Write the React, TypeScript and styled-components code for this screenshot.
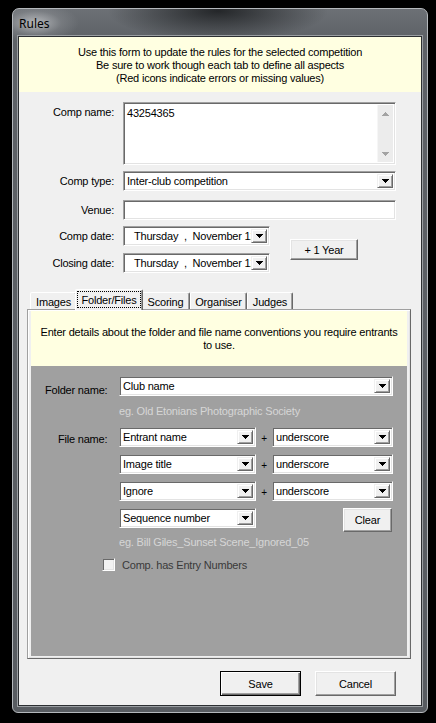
import React from "react";
import styled, { createGlobalStyle } from "styled-components";

const GlobalStyle = createGlobalStyle`
  html, body {
    margin: 0;
    padding: 0;
    background: #000;
  }

  body {
    font-family: "Liberation Sans", Arial, sans-serif;
    font-size: 11px;
    letter-spacing: -0.2px;
    color: #000;
  }

  * {
    box-sizing: border-box;
  }
`;

/* ---------- window chrome ---------- */

const DialogFrame = styled.div`
  width: 416px;
  height: 705px;
  margin: 8px 0 0 12px;
  padding: 0 5px 6px;
  display: flex;
  flex-direction: column;
  border: 1px solid #b4b8bc;
  border-radius: 7px 7px 6px 6px;
  background:
    radial-gradient(ellipse 44px 20px at 22px 14px, rgba(196, 198, 201, 0.85), rgba(150, 153, 157, 0.35) 60%, rgba(0, 0, 0, 0) 100%),
    radial-gradient(ellipse 110px 30px at 205px 2px, rgba(18, 20, 22, 0.8), rgba(18, 20, 22, 0) 100%),
    linear-gradient(180deg, #6c7075 0px, #5e6267 28px, #585c61 100%);
`;

const TitleBar = styled.div`
  height: 27px;
  display: flex;
  align-items: center;
  padding: 1px 0 0 1px;
  font-family: "Noto Sans", "Liberation Sans", sans-serif;
  font-size: 12px;
  letter-spacing: 0;
  color: #000;
`;

const Client = styled.div`
  flex: 1;
  display: flex;
  flex-direction: column;
  background: #f0f0f0;
  border: 1px solid #2c2f32;
  box-shadow: 0 0 0 1px #9a9ea2;
`;

const Banner = styled.div<{ $height: number; $padTop: number }>`
  height: ${(p) => p.$height}px;
  padding-top: ${(p) => p.$padTop}px;
  background: #ffffe1;
  text-align: center;
  line-height: 13px;
  white-space: nowrap;
`;

/* ---------- win32-ish controls ---------- */

const Sunken = styled.div<{ $height?: number }>`
  height: ${(p) => p.$height ?? 20}px;
  width: 100%;
  display: flex;
  align-items: stretch;
  padding: 2px;
  background: #fff;
  border: 1px solid;
  border-color: #a0a0a0 #fff #fff #a0a0a0;
  box-shadow: inset 1px 1px 0 #696969, inset -1px -1px 0 #e3e3e3;
  overflow: hidden;
`;

const FieldText = styled.span<{ $indent?: number; $top?: boolean }>`
  flex: 1;
  min-width: 0;
  display: flex;
  align-items: ${(p) => (p.$top ? "flex-start" : "center")};
  padding: ${(p) => (p.$top ? 2 : 0)}px 0 0 ${(p) => p.$indent ?? 1}px;
  white-space: pre;
  overflow: hidden;
`;

const DropButton = styled.span<{ $width?: number }>`
  flex: 0 0 ${(p) => p.$width ?? 16}px;
  display: flex;
  align-items: center;
  justify-content: center;
  background: #f0f0f0;
  border: 1px solid;
  border-color: #f0f0f0 #696969 #696969 #f0f0f0;
  box-shadow: inset 1px 1px 0 #fff, inset -1px -1px 0 #a0a0a0;
`;

const PushButton = styled.button<{ $width: number; $height: number; $default?: boolean }>`
  width: ${(p) => p.$width}px;
  height: ${(p) => p.$height}px;
  padding: 0;
  font-family: "Liberation Sans", Arial, sans-serif;
  font-size: 11px;
  letter-spacing: -0.2px;
  color: #000;
  background: #f0f0f0;
  border: 1px solid;
  border-color: ${(p) => (p.$default ? "#000" : "#fff #696969 #696969 #fff")};
  box-shadow: ${(p) =>
    p.$default
      ? "inset 1px 1px 0 #fff, inset -1px -1px 0 #696969, inset -2px -2px 0 #a0a0a0"
      : "inset -1px -1px 0 #a0a0a0, inset 1px 1px 0 #e3e3e3"};
`;

const ScrollBar = styled.span`
  flex: 0 0 16px;
  display: flex;
  flex-direction: column;
  justify-content: space-between;
  background: #ececec;
  border-left: 1px solid #f6f6f6;
`;

const ScrollArrow = styled.span`
  height: 17px;
  display: flex;
  align-items: center;
  justify-content: center;
`;

const Arrow = ({ up, color = "#000" }: { up?: boolean; color?: string }) => (
  <svg width="7" height="4" viewBox="0 0 7 4" style={{ transform: up ? "scaleY(-1)" : undefined }}>
    <rect x="0" y="0" width="7" height="1" fill={color} />
    <rect x="1" y="1" width="5" height="1" fill={color} />
    <rect x="2" y="2" width="3" height="1" fill={color} />
    <rect x="3" y="3" width="1" height="1" fill={color} />
  </svg>
);

const Combo = ({ value, indent }: { value: string; indent?: number }) => (
  <Sunken>
    <FieldText $indent={indent}>{value}</FieldText>
    <DropButton>
      <Arrow />
    </DropButton>
  </Sunken>
);

const DatePicker = ({ value }: { value: string }) => (
  <Sunken>
    <FieldText $indent={8}>{value}</FieldText>
    <DropButton>
      <Arrow />
    </DropButton>
  </Sunken>
);

/* ---------- top form ---------- */

const FormBody = styled.div`
  padding-top: 10px;
  display: flex;
  flex-direction: column;
`;

const FieldRow = styled.div<{ $top?: number; $fieldWidth?: number }>`
  display: grid;
  grid-template-columns: 95px ${(p) => p.$fieldWidth ?? 273}px;
  column-gap: 9px;
  align-items: center;
  margin-top: ${(p) => p.$top ?? 0}px;
`;

const FieldLabel = styled.label<{ $padTop?: number }>`
  text-align: right;
  align-self: ${(p) => (p.$padTop ? "start" : "center")};
  padding-top: ${(p) => p.$padTop ?? 0}px;
  white-space: nowrap;
`;

const DateBlock = styled.div`
  display: flex;
  align-items: center;
  margin-top: 6px;
`;

const DateColumn = styled.div`
  display: flex;
  flex-direction: column;
`;

const YearButtonSlot = styled.div`
  margin-left: 20px;
`;

/* ---------- tabs ---------- */

const TabStrip = styled.div`
  display: flex;
  align-items: flex-end;
  height: 20px;
  margin: 16px 0 0 11px;
`;

const Tab = styled.div<{ $width: number; $active?: boolean }>`
  position: relative;
  z-index: ${(p) => (p.$active ? 2 : 1)};
  width: ${(p) => (p.$active ? p.$width + 4 : p.$width)}px;
  height: ${(p) => (p.$active ? 21 : 17)}px;
  margin: 0 ${(p) => (p.$active ? -2 : 0)}px ${(p) => (p.$active ? -1 : 0)}px;
  padding: ${(p) => (p.$active ? "1px 1px 2px" : "2px 0 0")};
  display: flex;
  align-items: ${(p) => (p.$active ? "stretch" : "center")};
  justify-content: center;
  background: #f0f0f0;
  border: 1px solid;
  border-bottom: none;
  border-color: #fff #696969 transparent #fff;
  border-radius: 2px 2px 0 0;
  box-shadow: inset -1px 0 0 #a0a0a0;
  white-space: nowrap;
`;

const FocusRing = styled.span`
  flex: 1;
  display: flex;
  align-items: center;
  justify-content: center;
  border: 1px dotted #000;
`;

const TabPanel = styled.div`
  height: 350px;
  width: 384px;
  margin-left: 8px;
  padding: 1px 3px 2px;
  display: flex;
  flex-direction: column;
  border: 1px solid;
  border-color: #a0a0a0 #696969 #696969 #a0a0a0;
  box-shadow: inset 1px 1px 0 #fff, inset -1px -1px 0 #e3e3e3;
`;

const GreyPane = styled.div`
  flex: 1;
  display: flex;
  flex-direction: column;
  background: #a0a0a0;
`;

const PaneRow = styled.div<{ $top: number }>`
  display: grid;
  grid-template-columns: 88px 137px 16px 121px;
  align-items: start;
  margin-top: ${(p) => p.$top}px;
`;

const PaneLabel = styled.span<{ $indent: number; $padTop: number }>`
  padding: ${(p) => p.$padTop}px 0 0 ${(p) => p.$indent}px;
  white-space: nowrap;
`;

const Span3 = styled.div`
  grid-column: 2 / 5;
`;

const Hint = styled.div`
  grid-column: 2 / 5;
  line-height: 13px;
  color: #d6d6d6;
  white-space: nowrap;
`;

const Plus = styled.span`
  text-align: center;
  padding-top: 5px;
  font-size: 10px;
  line-height: 13px;
`;

const ClearSlot = styled.div`
  justify-self: end;
  margin-right: 1px;
`;

const CheckRow = styled.label`
  display: flex;
  align-items: center;
  gap: 7px;
  margin-top: 9px;
  padding-left: 71px;
  color: #3a3a3a;
`;

const CheckBox = styled.span`
  width: 13px;
  height: 13px;
  background: #f2f2f2;
  border: 1px solid;
  border-color: #a0a0a0 #fff #fff #a0a0a0;
  box-shadow: inset 1px 1px 0 #696969, inset -1px -1px 0 #e3e3e3;
`;

/* ---------- footer ---------- */

const Footer = styled.div`
  display: flex;
  justify-content: flex-end;
  gap: 14px;
  margin-top: 12px;
  padding-right: 25px;
`;

const tabs = [
  { label: "Images", width: 47 },
  { label: "Folder/Files", width: 64, active: true },
  { label: "Scoring", width: 49 },
  { label: "Organiser", width: 57 },
  { label: "Judges", width: 46 },
];

const fileParts = [
  ["Entrant name", "underscore"],
  ["Image title", "underscore"],
  ["Ignore", "underscore"],
];

export default function App() {
  return (
    <>
      <GlobalStyle />
      <DialogFrame>
        <TitleBar>Rules</TitleBar>
        <Client>
          <Banner $height={55} $padTop={9}>
            Use this form to update the rules for the selected competition
            <br />
            Be sure to work though each tab to define all aspects
            <br />
            (Red icons indicate errors or missing values)
          </Banner>

          <FormBody>
            <FieldRow>
              <FieldLabel $padTop={4}>Comp name:</FieldLabel>
              <Sunken $height={63}>
                <FieldText $indent={1} $top>
                  43254365
                </FieldText>
                <ScrollBar>
                  <ScrollArrow>
                    <Arrow up color="#a3a3a3" />
                  </ScrollArrow>
                  <ScrollArrow>
                    <Arrow color="#a3a3a3" />
                  </ScrollArrow>
                </ScrollBar>
              </Sunken>
            </FieldRow>

            <FieldRow $top={6}>
              <FieldLabel>Comp type:</FieldLabel>
              <Combo value="Inter-club competition" indent={1} />
            </FieldRow>

            <FieldRow $top={9}>
              <FieldLabel>Venue:</FieldLabel>
              <Sunken />
            </FieldRow>

            <DateBlock>
              <DateColumn>
                <FieldRow $fieldWidth={147}>
                  <FieldLabel>Comp date:</FieldLabel>
                  <DatePicker value={"Thursday  ,  November 12"} />
                </FieldRow>
                <FieldRow $top={7} $fieldWidth={147}>
                  <FieldLabel>Closing date:</FieldLabel>
                  <DatePicker value={"Thursday  ,  November 12"} />
                </FieldRow>
              </DateColumn>
              <YearButtonSlot>
                <PushButton $width={68} $height={21}>
                  + 1 Year
                </PushButton>
              </YearButtonSlot>
            </DateBlock>
          </FormBody>

          <TabStrip>
            {tabs.map((t) => (
              <Tab key={t.label} $width={t.width} $active={t.active}>
                {t.active ? <FocusRing>{t.label}</FocusRing> : t.label}
              </Tab>
            ))}
          </TabStrip>

          <TabPanel>
            <Banner $height={55} $padTop={15}>
              Enter details about the folder and file name conventions you require entrants
              <br />
              to use.
            </Banner>
            <GreyPane>
              <PaneRow $top={10}>
                <PaneLabel $indent={14} $padTop={8}>
                  Folder name:
                </PaneLabel>
                <Span3>
                  <Combo value="Club name" />
                </Span3>
              </PaneRow>

              <PaneRow $top={9}>
                <Hint>eg. Old Etonians Photographic Society</Hint>
              </PaneRow>

              {fileParts.map(([part, sep], i) => (
                <PaneRow key={part} $top={i === 0 ? 9 : 7}>
                  {i === 0 ? (
                    <PaneLabel $indent={27} $padTop={6}>
                      File name:
                    </PaneLabel>
                  ) : (
                    <span />
                  )}
                  <Combo value={part} />
                  <Plus>+</Plus>
                  <Combo value={sep} />
                </PaneRow>
              ))}

              <PaneRow $top={7}>
                <span />
                <Combo value="Sequence number" />
                <span />
                <ClearSlot>
                  <PushButton $width={49} $height={24}>
                    Clear
                  </PushButton>
                </ClearSlot>
              </PaneRow>

              <PaneRow $top={4}>
                <Hint>eg. Bill Giles_Sunset Scene_Ignored_05</Hint>
              </PaneRow>

              <CheckRow>
                <CheckBox />
                Comp. has Entry Numbers
              </CheckRow>
            </GreyPane>
          </TabPanel>

          <Footer>
            <PushButton $width={81} $height={25} $default>
              Save
            </PushButton>
            <PushButton $width={81} $height={25}>
              Cancel
            </PushButton>
          </Footer>
        </Client>
      </DialogFrame>
    </>
  );
}
